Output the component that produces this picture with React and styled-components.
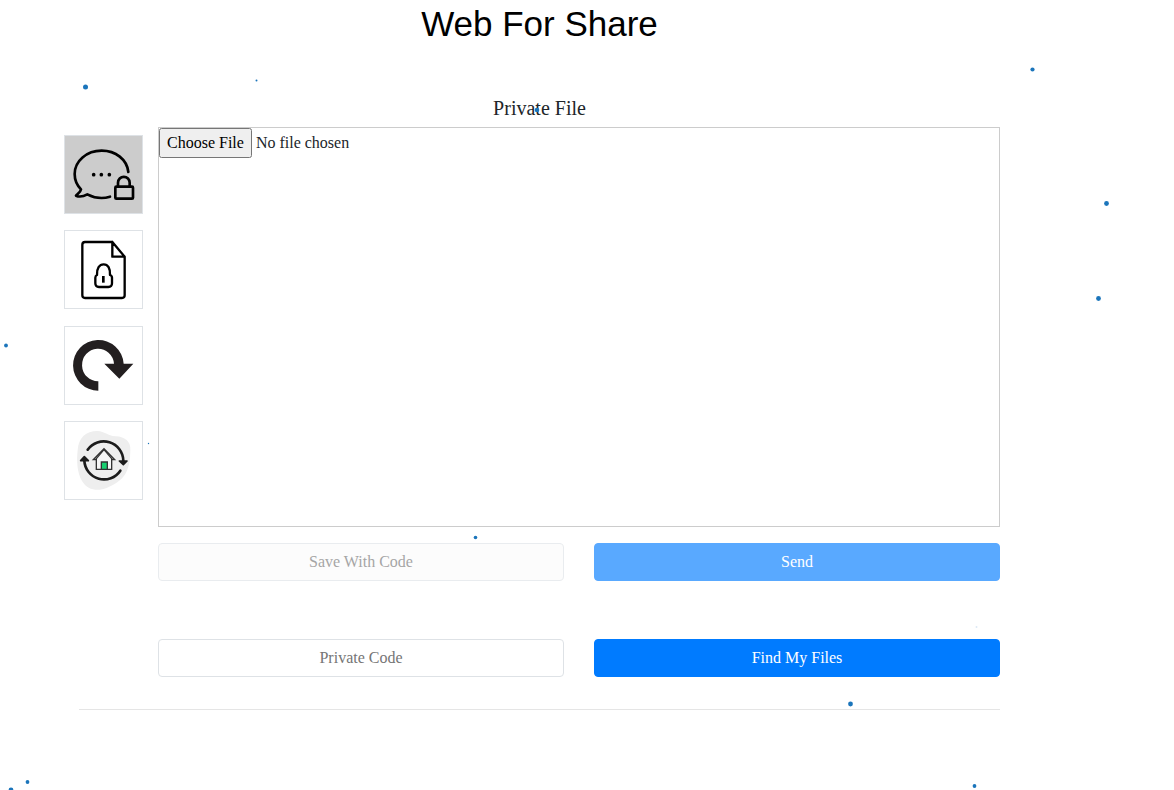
import { useState } from "react";
import styled, { createGlobalStyle } from "styled-components";

const particles = [
  { x: 85.5, y: 87, r: 2.5 },
  { x: 256.5, y: 80.5, r: 1 },
  { x: 537, y: 110, r: 2.3 },
  { x: 1032.5, y: 69.5, r: 2.1 },
  { x: 1106.5, y: 203.5, r: 2.4 },
  { x: 1098.5, y: 298.5, r: 2.4 },
  { x: 6, y: 345.5, r: 1.9 },
  { x: 148.5, y: 443.5, r: 0.7 },
  { x: 475.5, y: 537.5, r: 1.8 },
  { x: 976.5, y: 627, r: 1, opacity: 0.15 },
  { x: 850.5, y: 704, r: 2.4 },
  { x: 27.5, y: 782, r: 1.9 },
  { x: 11, y: 790, r: 2.4 },
  { x: 974.5, y: 786, r: 1.9 },
];

const MessageIcon = () => (
  <svg viewBox="45 48 231 231" fill="none" stroke="#000" strokeWidth="8" strokeLinecap="round" strokeLinejoin="round">
    <path d="M235 156C231 118 197 92 155 92C110 92 74 123 74 162C74 180 81 196 93 208C92 216 84 221 78 227C89 232 103 228 112 223C135 235 158 237 180 230" />
    <path d="M204 198v-10a17 17 0 0 1 35 0v10" />
    <rect x="196" y="200" width="53" height="36" rx="3" />
    <g fill="#000" stroke="none">
      <circle cx="131" cy="164" r="5.5" />
      <circle cx="154" cy="164" r="5.5" />
      <circle cx="178" cy="164" r="5.5" />
    </g>
  </svg>
);

const FileIcon = () => (
  <svg viewBox="45 33 231 231" fill="none" stroke="#000" strokeWidth="7" strokeLinecap="round" strokeLinejoin="round">
    <path d="M187 66H105q-8 0-8 8V226q0 8 8 8H216q8 0 8-8V110L187 66V110H224" />
    <path d="M136 173q0-6 5-8C140 145 148 133 161 133C174 133 181 145 180 165q6 2 6 8V190q0 11-11 11H147q-11 0-11-11Z" />
    <path strokeWidth="8" strokeLinecap="butt" d="M160 168v20" />
  </svg>
);

const ReloadIcon = () => (
  <svg viewBox="45 33 231 231" fill="#231f20">
    <path d="M145 224A76 76 0 1 1 221 143H250L208 188L163 143H192A48 49 0 1 0 145 196Z" />
  </svg>
);

const HomeIcon = () => (
  <svg viewBox="45 36 231 231" fill="none" stroke="#1c1c1c" strokeWidth="8" strokeLinecap="round">
    <path fill="#eee" stroke="none" d="M83 120C86 82 108 63 142 63C165 64 172 77 197 79C226 80 243 97 241 120C240 145 240 160 230 184C220 208 195 224 170 234C142 245 112 240 96 213C80 186 80 150 83 120Z" />
    <path d="M113 119A59 59 0 0 1 220 152" />
    <path d="M211 182A59 59 0 0 1 103 152" />
    <g fill="#1c1c1c" strokeWidth="5" strokeLinejoin="round">
      <path d="M208 153H231L220 164Z" />
      <path d="M92 152H115L103 140Z" />
    </g>
    <g stroke="#333" strokeWidth="4">
      <path fill="#f6f6f6" d="M139 146V178H185V146L162 119Z" />
      <path d="M139 149H130L162 116L194 149H185" />
      <path fill="#18d070" d="M154 178V156H172V178Z" />
    </g>
  </svg>
);

const menu = [
  { label: "Private Message", Icon: MessageIcon },
  { label: "Private File", Icon: FileIcon },
  { label: "Reload", Icon: ReloadIcon },
  { label: "Home", Icon: HomeIcon },
];

const App = () => {
  const [selected, setSelected] = useState(0);

  return (
    <>
      <GlobalStyle />
      <Particles aria-hidden="true">
        {particles.map(({ x, y, r, opacity }, index) => (
          <circle key={index} cx={x} cy={y} r={r} opacity={opacity} />
        ))}
      </Particles>
      <Container>
        <Title>Web For Share</Title>
        <Heading>Private File</Heading>
        <Content>
          <SideMenu>
            {menu.map(({ label, Icon }, index) => (
              <MenuButton
                key={label}
                type="button"
                aria-label={label}
                $active={index === selected}
                onClick={() => setSelected(index)}
              >
                <Icon />
              </MenuButton>
            ))}
          </SideMenu>
          <Form onSubmit={(e) => e.preventDefault()}>
            <FileInput type="file" aria-label="Private File" />
            <Row>
              <CodeInput placeholder="Save With Code" aria-label="Save With Code" disabled />
              <Button type="submit" disabled>Send</Button>
            </Row>
            <Row $spaced>
              <CodeInput placeholder="Private Code" aria-label="Private Code" />
              <Button type="button">Find My Files</Button>
            </Row>
          </Form>
        </Content>
        <Divider />
      </Container>
    </>
  );
};

export default App;

const GlobalStyle = createGlobalStyle`
  * {
    box-sizing: border-box;
  }

  body {
    margin: 0;
    background: #fff;
    color: #212529;
    font-family: "Liberation Serif", "Times New Roman", serif;
    font-size: 16px;
    line-height: 24px;
  }
`;

const Particles = styled.svg`
  position: fixed;
  inset: 0;
  width: 100%;
  height: 100%;
  fill: #1b75bb;
  pointer-events: none;
`;

const Container = styled.main`
  margin: 0 174px 0 64px;
`;

const Title = styled.h1`
  margin: 0 0 48px 15px;
  color: #000;
  font-family: "Liberation Sans", Arial, sans-serif;
  font-size: 35px;
  font-weight: 400;
  line-height: 48px;
  text-align: center;
`;

const Heading = styled.h2`
  margin: 0 0 7px 15px;
  font-size: 20px;
  font-weight: 400;
  line-height: 24px;
  text-align: center;
`;

const Content = styled.div`
  display: grid;
  grid-template-columns: 79px 1fr;
  gap: 15px;
  align-items: start;
`;

const SideMenu = styled.nav`
  display: flex;
  flex-direction: column;
  justify-content: space-between;
  height: 365px;
  margin-top: 8px;
`;

const MenuButton = styled.button`
  width: 79px;
  height: 79px;
  padding: 0;
  border: 1px solid #dee2e6;
  background: ${({ $active }) => ($active ? "#ccc" : "#fff")};
  cursor: pointer;

  svg {
    display: block;
    width: 100%;
  }
`;

const Form = styled.form`
  display: flex;
  flex-direction: column;
`;

const FileInput = styled.input`
  width: 100%;
  height: 400px;
  border: 1px solid #ccc;
  font: inherit;
  color: inherit;

  &::file-selector-button {
    padding: 4px 6px;
    font: inherit;
  }
`;

const Row = styled.div`
  display: grid;
  grid-template-columns: 1fr 1fr;
  gap: 30px;
  margin-top: ${({ $spaced }) => ($spaced ? "58px" : "16px")};
`;

const CodeInput = styled.input`
  width: 100%;
  height: 38px;
  padding: 6px 12px;
  border: 1px solid #dee2e6;
  border-radius: 4px;
  background: #fff;
  font: inherit;
  text-align: center;

  &::placeholder {
    color: #757575;
  }

  &:disabled {
    background: #fafafa;
    opacity: 0.65;
  }
`;

const Button = styled.button`
  height: 38px;
  padding: 6px 12px;
  border: 1px solid #007bff;
  border-radius: 4px;
  background: #007bff;
  color: #fff;
  font: inherit;
  cursor: pointer;

  &:disabled {
    opacity: 0.65;
    cursor: default;
  }
`;

const Divider = styled.hr`
  margin: 32px 0 16px 15px;
  border: 0;
  border-top: 1px solid #e5e5e5;
`;
